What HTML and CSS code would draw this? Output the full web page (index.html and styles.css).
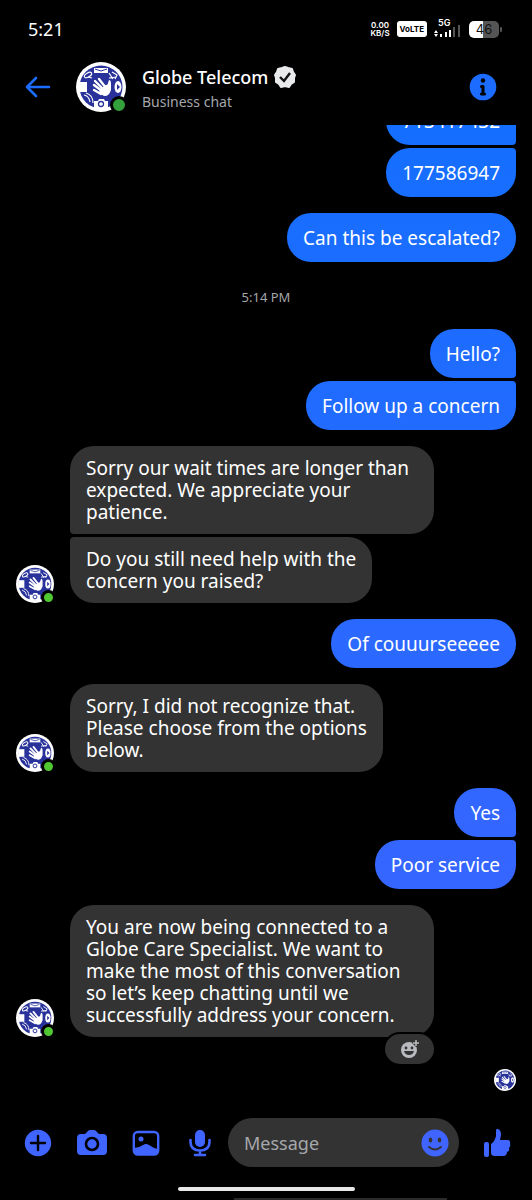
FILE: index.html
```
<!DOCTYPE html>
<html lang="en">
<head>
  <meta charset="UTF-8">
  <meta name="viewport" content="width=device-width, initial-scale=1.0">
  <title>Globe Telecom - Business chat</title>
  <link rel="stylesheet" href="styles.css">
</head>
<body>

<!-- shared logo, reused by every avatar -->
<svg class="defs" aria-hidden="true">
  <symbol id="logo" viewBox="0 0 50 50">
    <circle cx="25" cy="25" r="25" fill="#fff"/>
    <circle cx="25" cy="25" r="21.500" fill="#28329a"/>
    <path d="M18 6h14v5H18z" fill="#fff"/>
    <path d="M19 7l6 2 6-2" fill="none" stroke="#28329a" stroke-width="1"/>
    <path d="M3 20h8v10H3z" fill="#fff"/>
    <path d="M18 39h4l1-2h5l1 2h3v8H18z" fill="#fff"/>
    <circle cx="25" cy="42" r="2.500" fill="none" stroke="#28329a" stroke-width="1.300"/>
    <ellipse cx="42" cy="25" rx="3.500" ry="6" fill="#fff"/>
    <path d="M41 22v6l3-3z" fill="#28329a"/>
    <g fill="none" stroke="#fff" stroke-width="1.200">
      <ellipse cx="12" cy="13" rx="4" ry="2" transform="rotate(-30 12 13)"/>
      <path d="M12 15l4 1M33 11l4 6M36 10l5 3-2 4M33 16l7-1"/>
      <path d="M8 33q5 1 6 7M10 31q7 2 7 10"/>
    </g>
    <g fill="none" stroke="#fff" stroke-width="2.400" stroke-linecap="round">
      <path d="M18 23l8 6M19 19l9 9M23 17l7 9M18 28l7 4"/>
    </g>
    <path d="M23 29l5-5 2-1q2 0 2-2l1-3q2 0 2 4v6q-2 6-6 6-3 0-6-5z" fill="#fff"/>
  </symbol>
</svg>

<div class="app">
  <div class="status-bar">
    <span class="clock">5:21</span>
    <div class="status-icons">
      <div class="net-speed">0.00<br>KB/S</div>
      <div class="volte">VoLTE</div>
      <div class="signal">
        <span>5G</span>
        <svg width="28" height="12" viewBox="0 0 28 12">
          <path d="M0 8l2-3 2 3zM0 9l2 3 2-3z" fill="#fff"/>
          <path d="M6 9h2v3H6zM11 7h2v5h-2zM15 5h2v7h-2z" fill="#fff"/>
          <path d="M19 2h2v10h-2zM24 0h2v12h-2z" fill="#555"/>
        </svg>
      </div>
      <div class="battery">46</div>
    </div>
  </div>

  <header class="chat-header">
    <button class="icon-btn" aria-label="Back">
      <svg width="26" height="24" viewBox="0 0 26 24" fill="none" stroke="#1c6dff" stroke-width="2.600" stroke-linecap="round" stroke-linejoin="round"><path d="M24 12H2M11 3l-9 9 9 9"/></svg>
    </button>
    <div class="avatar avatar-large">
      <svg><use href="#logo"/></svg>
      <span class="online"></span>
    </div>
    <div class="contact">
      <h1>Globe Telecom
        <svg width="22" height="22" viewBox="0 0 22 22"><path d="M11 1l3 1 4 1 1 3 2 3-1 3 0 4-3 2-2 3-4-1-4 1-2-3-3-2 0-4-1-3 2-3 1-3 4-1z" fill="#e9eaec" stroke="#e9eaec" stroke-width="2" stroke-linejoin="round"/><path d="M6 11l4 4 6-8" fill="none" stroke="#111" stroke-width="2.400"/></svg>
      </h1>
      <p>Business chat</p>
    </div>
    <button class="icon-btn" aria-label="Info">
      <svg width="28" height="28" viewBox="0 0 28 28"><circle cx="14" cy="14" r="13.300" fill="#1c6dff"/><circle cx="14" cy="7.500" r="2.200"/><path d="M14 13.500v7M12.500 13.500H14M12.500 21h3" stroke="#000" stroke-width="3" stroke-linecap="round"/></svg>
    </button>
  </header>

  <main class="chat">
    <div class="group sent">
      <div class="bubble">713417432</div>
      <div class="bubble">177586947</div>
    </div>
    <div class="group sent">
      <div class="bubble">Can this be escalated?</div>
    </div>
    <time class="timestamp">5:14 PM</time>
    <div class="group sent">
      <div class="bubble">Hello?</div>
      <div class="bubble">Follow up a concern</div>
    </div>
    <div class="row">
      <div class="avatar">
        <svg><use href="#logo"/></svg>
        <span class="online"></span>
      </div>
      <div class="group received">
        <div class="bubble">Sorry our wait times are longer than expected. We appreciate your patience.</div>
        <div class="bubble">Do you still need help with the<br>concern you raised?</div>
      </div>
    </div>
    <div class="group sent">
      <div class="bubble">Of couuurseeeee</div>
    </div>
    <div class="row">
      <div class="avatar">
        <svg><use href="#logo"/></svg>
        <span class="online"></span>
      </div>
      <div class="group received">
        <div class="bubble">Sorry, I did not recognize that.<br>Please choose from the options<br>below.</div>
      </div>
    </div>
    <div class="group sent">
      <div class="bubble">Yes</div>
      <div class="bubble">Poor service</div>
    </div>
    <div class="row">
      <div class="avatar">
        <svg><use href="#logo"/></svg>
        <span class="online"></span>
      </div>
      <div class="group received">
        <div class="bubble">You are now being connected to a Globe Care Specialist. We want to make the most of this conversation so let’s keep chatting until we successfully address your concern.</div>
        <button class="react" aria-label="Add reaction">
          <svg width="20" height="20" viewBox="0 0 20 20"><circle cx="9" cy="11" r="8" fill="#b9bbc0"/><path d="M12 0h8v8h-4l-4-4z" fill="#333"/><path d="M16 1v6M13 4h6" stroke="#b9bbc0" stroke-width="1.500"/><circle cx="6" cy="9" r="1.400" fill="#333"/><circle cx="12" cy="9" r="1.400" fill="#333"/><path d="M4 12h10q-1 4-5 4t-5-4z" fill="#333"/></svg>
        </button>
      </div>
    </div>
    <svg class="seen" role="img" aria-label="Seen"><use href="#logo"/></svg>
  </main>

  <form class="composer">
    <div class="tools">
      <button type="button" class="icon-btn" aria-label="More">
        <svg width="28" height="28" viewBox="0 0 28 28"><circle cx="14" cy="14" r="13.200" fill="#4064ff"/><path d="M14 7v14M7 14h14" stroke="#000" stroke-width="2.400" stroke-linecap="round"/></svg>
      </button>
      <button type="button" class="icon-btn" aria-label="Camera">
        <svg width="30" height="28" viewBox="0 0 30 28"><path d="M4 5h4l3-3q1-1 2-1h4q1 0 2 1l3 3h4q4 0 4 4v13q0 4-4 4H4q-4 0-4-4V9q0-4 4-4z" fill="#4064ff"/><circle cx="15" cy="15" r="6" fill="none" stroke="#000" stroke-width="2.600"/></svg>
      </button>
      <button type="button" class="icon-btn" aria-label="Gallery">
        <svg width="28" height="28" viewBox="0 0 28 28"><rect x="1.800" y="3" width="24.400" height="22.500" rx="4" fill="none" stroke="#4064ff" stroke-width="2.400"/><circle cx="9" cy="10" r="2.500" fill="#4064ff"/><path d="M2 19q5 0 9-3 3-2 6 0 4 3 9 4v2q0 4-4 4H6q-4 0-4-4z" fill="#4064ff"/></svg>
      </button>
      <button type="button" class="icon-btn" aria-label="Voice message">
        <svg width="22" height="28" viewBox="0 0 22 28"><rect x="6" y="1" width="10" height="17" rx="5" fill="#4064ff"/><path d="M1.500 11v2q0 8.500 9.500 8.500t9.500-8.500v-2M11 22v4M6 26h10" fill="none" stroke="#4064ff" stroke-width="2.600" stroke-linecap="round"/></svg>
      </button>
    </div>
    <div class="field">
      <input type="text" placeholder="Message" aria-label="Message">
      <button type="button" class="icon-btn" aria-label="Emoji">
        <svg width="28" height="28" viewBox="0 0 28 28"><circle cx="14" cy="14" r="13.500" fill="#4064ff"/><ellipse cx="9.500" cy="11" rx="1.800" ry="2.500" fill="#333"/><ellipse cx="18.500" cy="11" rx="1.800" ry="2.500" fill="#333"/><path d="M8 18q6 5 12 0" fill="none" stroke="#333" stroke-width="2" stroke-linecap="round"/></svg>
      </button>
    </div>
    <button type="button" class="icon-btn like" aria-label="Like">
      <svg width="28" height="30" viewBox="0 0 28 30" fill="#4064ff"><rect x="1" y="14" width="5" height="15" rx="2"/><path d="M8 16q4-3 5-8V3q0-3 2-2 3 1 3 6l-1 5h7q4 0 3 4 1 2-1 4 1 3-2 4 0 4-4 4h-8q-4 0-4-3z"/></svg>
    </button>
  </form>

  <div class="home-bar"></div>
  <div class="sheet-edge"></div>
</div>

</body>
</html>
```
FILE: styles.css
```
* {
  box-sizing: border-box;
}
body {
  margin: 0;
  background: #000;
  color: #fff;
  font-family: "Noto Sans", sans-serif;
}
.defs {
  display: none;
}
.app {
  display: flex;
  flex-direction: column;
  height: 100vh;
}
button {
  padding: 0;
  border: none;
  background: none;
  cursor: pointer;
}
.icon-btn {
  display: flex;
  align-items: center;
  justify-content: center;
  flex-shrink: 0;
}

/* status bar */
.status-bar {
  display: flex;
  align-items: center;
  justify-content: space-between;
  height: 58px;
  padding: 0 33px 0 28px;
}
.clock {
  font-size: 18px;
}
.status-icons {
  display: flex;
  align-items: center;
  gap: 7px;
  font-family: Inter, sans-serif;
}
.net-speed {
  font-size: 8px;
  line-height: 8px;
  font-weight: 600;
  text-align: center;
}
.volte {
  padding: 0 3px;
  border-radius: 3px;
  background: #fff;
  color: #000;
  font-size: 8px;
  line-height: 16px;
  font-weight: 700;
}
.signal {
  position: relative;
  padding-top: 4px;
}
.signal span {
  position: absolute;
  top: -3px;
  left: 4px;
  font-size: 9px;
  line-height: 10px;
  font-weight: 600;
}
.signal svg {
  display: block;
}
.battery {
  position: relative;
  width: 30px;
  border-radius: 5px;
  background: linear-gradient(90deg, #fff 47%, #555 47%);
  color: #111;
  font-size: 13px;
  line-height: 17px;
  text-align: center;
}
.battery::after {
  content: "";
  position: absolute;
  top: 6px;
  right: -3px;
  width: 2px;
  height: 5px;
  border-radius: 1px;
  background: #555;
}

/* header */
.chat-header {
  display: flex;
  align-items: center;
  height: 67px;
  padding: 0 35px 9px 25px;
}
.avatar {
  position: relative;
  flex-shrink: 0;
  width: 38px;
  height: 38px;
}
.avatar svg {
  display: block;
  width: 100%;
  height: 100%;
}
.online {
  position: absolute;
  right: -2px;
  bottom: -2px;
  width: 15px;
  height: 15px;
  border: 3px solid #000;
  border-radius: 50%;
  background: #50c832;
}
.avatar-large {
  width: 50px;
  height: 50px;
  margin: 0 16px 0 25px;
}
.avatar-large .online {
  width: 18px;
  height: 18px;
  background: #34a03c;
}
.contact {
  flex: 1;
}
.contact h1 {
  display: flex;
  align-items: center;
  gap: 6px;
  margin: 2px 0 0;
  font-size: 18px;
  line-height: 24px;
  font-weight: 500;
}
.contact p {
  margin: 3px 0 0;
  color: #a5a7ab;
  font-size: 14px;
  line-height: 20px;
}

/* messages */
.chat {
  flex: 1;
  min-height: 0;
  overflow: hidden;
  display: flex;
  flex-direction: column;
  justify-content: flex-end;
  gap: 16px;
  padding: 0 16px 27px;
}
.chat > * {
  flex-shrink: 0;
}
.group {
  display: flex;
  flex-direction: column;
  gap: 3px;
}
.sent {
  align-items: flex-end;
}
.received {
  position: relative;
  align-items: flex-start;
  max-width: 364px;
}
.row {
  display: flex;
  align-items: flex-end;
  gap: 16px;
}
.bubble {
  padding: 11px 16px;
  border-radius: 24px;
  background: #333;
  font-size: 19px;
  line-height: 22px;
}
.sent .bubble {
  padding: 14px 16px 13px;
  background: linear-gradient(#0f70ff, #4362ff) fixed;
}
.sent .bubble:not(:last-child) {
  border-bottom-right-radius: 4px;
}
.sent .bubble:not(:first-child) {
  border-top-right-radius: 4px;
}
.received .bubble:has(+ .bubble) {
  border-bottom-left-radius: 4px;
}
.received .bubble + .bubble {
  border-top-left-radius: 4px;
}
.timestamp {
  align-self: center;
  margin: 10px 0 6px;
  color: #a5a7ab;
  font-size: 13px;
  line-height: 19px;
}
.react {
  position: absolute;
  right: -2px;
  bottom: -29px;
  display: flex;
  align-items: center;
  justify-content: center;
  width: 53px;
  height: 34px;
  border: 2px solid #000;
  border-radius: 17px;
  background: #333;
}
.seen {
  align-self: flex-end;
  width: 22px;
  height: 22px;
  margin-top: 16px;
}

/* composer */
.composer {
  display: flex;
  align-items: center;
  gap: 14px;
  padding: 0 21px 0 24px;
}
.tools {
  display: flex;
  gap: 26px;
}
.tools .icon-btn {
  width: 28px;
}
.tools svg {
  flex-shrink: 0;
}
.field {
  display: flex;
  flex: 1;
  align-items: center;
  min-width: 0;
  height: 49px;
  padding: 0 10px 0 16px;
  border-radius: 25px;
  background: #333;
}
.field input {
  flex: 1;
  min-width: 0;
  padding: 0;
  border: none;
  outline: none;
  background: none;
  color: #fff;
  font-family: "Noto Sans", sans-serif;
  font-size: 18px;
}
.field input::placeholder {
  color: #a5a7ab;
}
.like {
  margin-left: 10px;
}
.home-bar {
  align-self: center;
  width: 177px;
  height: 4px;
  margin: 20px 0 7px;
  border-radius: 2px;
  background: #e8e8e8;
}
.sheet-edge {
  width: 40%;
  height: 2px;
  margin-left: 44%;
  background: #2a2a2a;
}
```
